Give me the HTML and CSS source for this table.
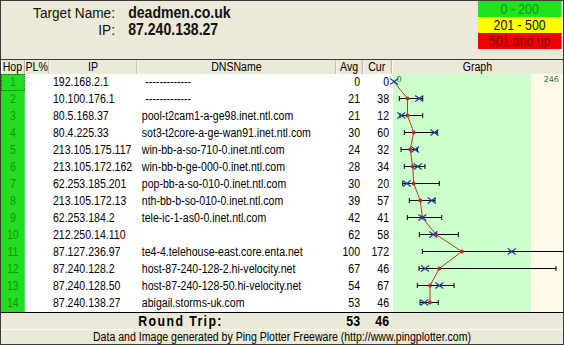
FILE: index.html
```html
<!DOCTYPE html>
<html>
<head>
<meta charset="utf-8">
<link rel="stylesheet" href="styles.css">
</head>
<body>
<div class="frame">
 <div class="page">
  <div class="top">
   <div class="target">
    <div class="tline"><span class="tlabel">Target Name:</span><span class="tval">deadmen.co.uk</span></div>
    <div class="tline"><span class="tlabel">IP:</span><span class="tval">87.240.138.27</span></div>
   </div>
   <div class="legend">
    <div class="lg g">0 - 200</div>
    <div class="lg y">201 - 500</div>
    <div class="lg r">501 and up</div>
   </div>
  </div>
  <div class="thead">
   <div class="th">Hop</div><div class="th">PL%</div><div class="th">IP</div><div class="th">DNSName</div><div class="th">Avg</div><div class="th">Cur</div><div class="th last">Graph</div>
  </div>
  <div class="tbody">
   <div class="rows">
    <div class="row"><div class="hop focus">1</div><div></div><div class="ip">192.168.2.1</div><div class="dns dash">-------------</div><div class="num">0</div><div class="num">0</div></div>
    <div class="row"><div class="hop">2</div><div></div><div class="ip">10.100.176.1</div><div class="dns dash">-------------</div><div class="num">21</div><div class="num">38</div></div>
    <div class="row"><div class="hop">3</div><div></div><div class="ip">80.5.168.37</div><div class="dns">pool-t2cam1-a-ge98.inet.ntl.com</div><div class="num">21</div><div class="num">12</div></div>
    <div class="row"><div class="hop">4</div><div></div><div class="ip">80.4.225.33</div><div class="dns">sot3-t2core-a-ge-wan91.inet.ntl.com</div><div class="num">30</div><div class="num">60</div></div>
    <div class="row"><div class="hop">5</div><div></div><div class="ip">213.105.175.117</div><div class="dns">win-bb-a-so-710-0.inet.ntl.com</div><div class="num">24</div><div class="num">32</div></div>
    <div class="row"><div class="hop">6</div><div></div><div class="ip">213.105.172.162</div><div class="dns">win-bb-b-ge-000-0.inet.ntl.com</div><div class="num">28</div><div class="num">34</div></div>
    <div class="row"><div class="hop">7</div><div></div><div class="ip">62.253.185.201</div><div class="dns">pop-bb-a-so-010-0.inet.ntl.com</div><div class="num">30</div><div class="num">20</div></div>
    <div class="row"><div class="hop">8</div><div></div><div class="ip">213.105.172.13</div><div class="dns">nth-bb-b-so-010-0.inet.ntl.com</div><div class="num">39</div><div class="num">57</div></div>
    <div class="row"><div class="hop">9</div><div></div><div class="ip">62.253.184.2</div><div class="dns">tele-ic-1-as0-0.inet.ntl.com</div><div class="num">42</div><div class="num">41</div></div>
    <div class="row"><div class="hop">10</div><div></div><div class="ip">212.250.14.110</div><div class="dns"></div><div class="num">62</div><div class="num">58</div></div>
    <div class="row"><div class="hop">11</div><div></div><div class="ip">87.127.236.97</div><div class="dns">te4-4.telehouse-east.core.enta.net</div><div class="num">100</div><div class="num">172</div></div>
    <div class="row"><div class="hop">12</div><div></div><div class="ip">87.240.128.2</div><div class="dns">host-87-240-128-2.hi-velocity.net</div><div class="num">67</div><div class="num">46</div></div>
    <div class="row"><div class="hop">13</div><div></div><div class="ip">87.240.128.50</div><div class="dns">host-87-240-128-50.hi-velocity.net</div><div class="num">54</div><div class="num">67</div></div>
    <div class="row"><div class="hop">14</div><div></div><div class="ip">87.240.138.27</div><div class="dns">abigail.storms-uk.com</div><div class="num">53</div><div class="num">46</div></div>
   </div>
   <div class="graph">
    <svg width="100%" height="238" viewBox="0 0 171.3 238" preserveAspectRatio="none">
     <rect x="1.3" y="0" width="138" height="238" fill="#ccffcc"/>
     <rect x="139.3" y="0" width="32" height="238" fill="#fff9ea"/>
     <text x="4.8" y="7.8" class="scale">0</text>
     <text x="152" y="7.8" class="scale">246</text>
     <g stroke="#000" stroke-width="1" fill="none">
      <path d="M7.6 24.5H31M7.6 22v5M31 22v5"/>
      <path d="M8.3 41.5H31M8.3 39v5M31 39v5"/>
      <path d="M12.6 58.5H45.6M12.6 56v5M45.6 56v5"/>
      <path d="M9.3 75.5H25.6M9.3 73v5M25.6 73v5"/>
      <path d="M12.6 92.5H33.3M12.6 90v5M33.3 90v5"/>
      <path d="M11 109.5H47.6M11 107v5M47.6 107v5"/>
      <path d="M17.6 126.5H43.3M17.6 124v5M43.3 124v5"/>
      <path d="M15.6 143.5H50M15.6 141v5M50 141v5"/>
      <path d="M27.6 160.5H66.6M27.6 158v5M66.6 158v5"/>
      <path d="M30.6 177.5H171.3M30.6 175v5"/>
      <path d="M27.3 194.5H164.3M27.3 192v5M164.3 192v5"/>
      <path d="M25.6 211.5H62.3M25.6 209v5M62.3 209v5"/>
      <path d="M28.3 228.5H46.6M28.3 226v5M46.6 226v5"/>
     </g>
     <polyline fill="none" stroke="#a0401c" stroke-width="1" points="1.8,7.5 15.8,24.5 15.8,41.5 22,58.5 18.5,75.5 21,92.5 22,109.5 28.6,126.5 30.6,143.5 44.3,160.5 70.2,177.5 47.6,194.5 38.4,211.5 38.2,228.5"/>
     <g fill="#c02a1c">
      <circle cx="15.8" cy="24.5" r="2"/>
      <circle cx="15.8" cy="41.5" r="2"/>
      <circle cx="22" cy="58.5" r="2"/>
      <circle cx="18.5" cy="75.5" r="2"/>
      <circle cx="21" cy="92.5" r="2"/>
      <circle cx="22" cy="109.5" r="2"/>
      <circle cx="28.6" cy="126.5" r="2"/>
      <circle cx="30.6" cy="143.5" r="2"/>
      <circle cx="44.3" cy="160.5" r="2"/>
      <circle cx="70.2" cy="177.5" r="2"/>
      <circle cx="47.6" cy="194.5" r="2"/>
      <circle cx="38.4" cy="211.5" r="2"/>
      <circle cx="38.2" cy="228.5" r="2"/>
     </g>
     <g stroke="#1f3c9c" stroke-width="1.2" fill="none">
      <path d="M-1.5 4.5l8 6M-1.5 10.5l8-6"/>
      <path d="M23.5 21.5l8 6M23.5 27.5l8-6"/>
      <path d="M5.6 38.5l8 6M5.6 44.5l8-6"/>
      <path d="M38.7 55.5l8 6M38.7 61.5l8-6"/>
      <path d="M19.4 72.5l8 6M19.4 78.5l8-6"/>
      <path d="M22 89.5l8 6M22 95.5l8-6"/>
      <path d="M11 106.5l8 6M11 112.5l8-6"/>
      <path d="M36 123.5l8 6M36 129.5l8-6"/>
      <path d="M26.6 140.5l8 6M26.6 146.5l8-6"/>
      <path d="M37.6 157.5l8 6M37.6 163.5l8-6"/>
      <path d="M116 174.5l8 6M116 180.5l8-6"/>
      <path d="M29.3 191.5l8 6M29.3 197.5l8-6"/>
      <path d="M43.6 208.5l8 6M43.6 214.5l8-6"/>
      <path d="M28.6 225.5l8 6M28.6 231.5l8-6"/>
     </g>
    </svg>
   </div>
  </div>
  <div class="total">
   <div></div><div class="rt">Round Trip:</div><div class="num">53</div><div class="num">46</div><div></div>
  </div>
  <div class="footer">Data and Image generated by Ping Plotter Freeware (http://www.pingplotter.com)</div>
 </div>
</div>
</body>
</html>
```
FILE: styles.css
```css
* { box-sizing: border-box; }
html, body { margin: 0; padding: 0; }
body { width: 564px; height: 345px; overflow: hidden; background: #ECE9D8; }
.frame { width: 564px; height: 345px; border: 1px solid #3a3a3a; overflow: hidden; background: #ECE9D8; }
.page {
  width: 638.64px; height: 343px;
  transform: scaleX(0.88); transform-origin: 0 0;
  font-family: "Liberation Sans", Arial, sans-serif; font-size: 12px; color: #000;
  display: flex; flex-direction: column;
}
.top { height: 59px; flex: none; border-bottom: 1px solid #3a3a3a; display: flex; align-items: flex-start; }
.target { padding-top: 3px; }
.tline { display: flex; align-items: baseline; height: 17px; line-height: 17px; }
.tlabel { width: 129.5px; text-align: right; font-size: 15.5px; color: #111; }
.tval { margin-left: 15px; font-weight: bold; font-size: 16px; color: #111; }
.legend { margin-left: auto; margin-right: 1.5px; width: 95.5px; display: flex; flex-direction: column; }
.lg { height: 16px; line-height: 16px; text-align: center; font-size: 14px; }
.lg.g { background: #1fe31f; color: #0b9a0b; }
.lg.y { background: #ffff00; color: #111; }
.lg.r { background: #ec0000; color: #8c0000; }
.thead { display: grid; grid-template-columns: 27px 28px 100px 226px 30px 33px 1fr; height: 14px; flex: none; }
.th { text-align: center; line-height: 14px; border-right: 1px solid #aca899; box-shadow: inset 1px 0 #fff; }
.th.last { border-right: 0; }
.tbody { display: flex; height: 238px; flex: none; background: #fff; }
.rows { width: 444px; flex: none; display: flex; flex-direction: column; }
.row { display: grid; grid-template-columns: 27px 28px 100px 226px 30px 33px; height: 17px; line-height: 17px; }
.hop { background: #22dd22; color: #139413; text-align: center; }
.hop.focus { outline: 1px dotted #0c5a0c; outline-offset: -1px; }
.ip { padding-left: 4px; white-space: nowrap; }
.dns { padding-left: 5px; white-space: nowrap; }
.dns.dash { padding-left: 9px; }
.num { text-align: right; padding-right: 3px; }
.graph { flex: 1; }
.graph svg { display: block; overflow: visible; }
.scale { font-family: "DejaVu Sans", sans-serif; font-size: 8px; fill: #1f6f1f; }
.total {
  display: grid; grid-template-columns: 155px 226px 30px 33px 1fr;
  height: 17px; line-height: 16px; flex: none;
  border-top: 1px solid #000; font-weight: bold; font-size: 14px;
}
.rt { letter-spacing: 1.6px; padding-left: 1px; }
.footer { height: 15px; line-height: 14px; flex: none; text-align: center; border-top: 1px solid #fbfaf4; font-size: 12px; }
```
